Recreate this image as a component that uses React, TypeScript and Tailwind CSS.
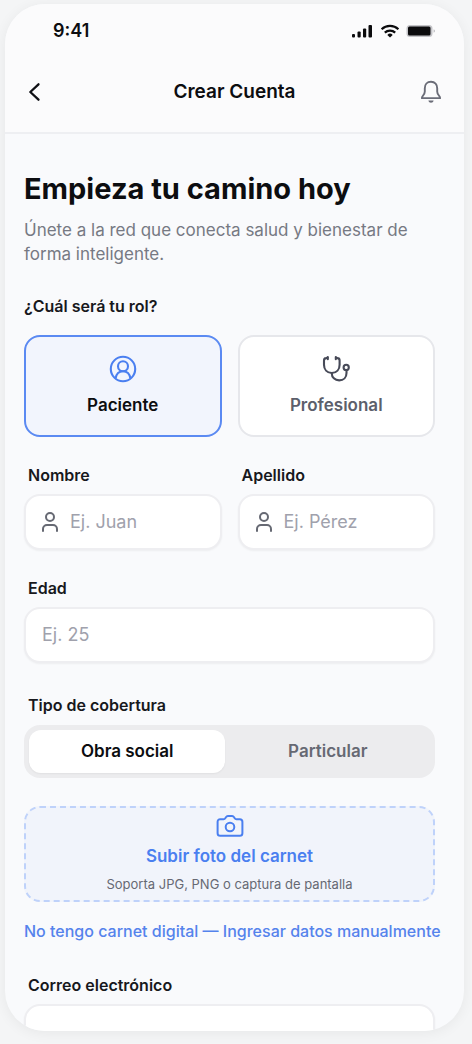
import { useState } from 'react';
import { User } from 'lucide-react';

type Role = 'paciente' | 'profesional';
type Coverage = 'obra-social' | 'particular';

const StatusIcons = () => (
  <div className="flex items-center gap-1.5">
    <svg className="h-4 w-6" viewBox="0 0 24 16" fill="#0b0b0d" aria-hidden="true">
      <rect x="2" y="11" width="3" height="3.5" rx="1" />
      <rect x="7.5" y="8.5" width="3.2" height="6" rx="1" />
      <rect x="13" y="5.5" width="3.2" height="9" rx="1" />
      <rect x="18.5" y="2" width="3.5" height="12.5" rx="1" />
    </svg>
    <svg className="h-4 w-5" viewBox="0 0 20 16" fill="none" stroke="#0b0b0d" strokeWidth="2.2" aria-hidden="true">
      <path d="M1.6 6.2a12.3 12.3 0 0 1 16.8 0" />
      <path d="M4.8 9.6a7.6 7.6 0 0 1 10.4 0" />
      <path d="M10 14.6 7.3 11.9a3.9 3.9 0 0 1 5.4 0Z" fill="#0b0b0d" stroke="none" />
    </svg>
    <svg className="h-4 w-8" viewBox="0 0 32 16" aria-hidden="true">
      <rect x="0.5" y="2" width="26" height="12" rx="3.5" fill="#c4c4c8" />
      <rect x="2" y="3.5" width="22.5" height="9" rx="1.5" fill="#0b0b0d" />
      <path d="M27.6 6.2c1.8.6 1.8 2.9 0 3.5Z" fill="#b9b9bd" />
    </svg>
  </div>
);

const BackIcon = () => (
  <svg className="h-5 w-4" viewBox="0 0 16 20" fill="none" stroke="#0f1015" strokeWidth="2.3" strokeLinecap="round" strokeLinejoin="round" aria-hidden="true">
    <path d="M12.5 2.3 4.3 10l8.200 7.700" />
  </svg>
);

const BellIcon = () => (
  <svg className="size-6" viewBox="0 0 24 24" fill="none" stroke="#6b6d78" strokeWidth="1.9" strokeLinejoin="round" aria-hidden="true">
    <path d="M12 1.8c-4 0-6.2 2.8-6.2 6.4v3.2c0 1.6-.6 2.7-1.7 4.1-.8 1-1.3 1.7-1.2 2.6h18.2c.1-.9-.4-1.6-1.2-2.6-1.1-1.4-1.7-2.5-1.7-4.1V8.2c0-3.6-2.2-6.4-6.2-6.4Z" />
    <path d="M9.4 20.6h5.2c-.3 1.4-1.3 2.2-2.6 2.2s-2.3-.8-2.6-2.2Z" fill="#6b6d78" stroke="none" />
  </svg>
);

const PatientIcon = () => (
  <svg className="size-7" viewBox="0 0 28 28" fill="none" stroke="#4a7ff0" strokeWidth="2.1" aria-hidden="true">
    <circle cx="14" cy="14" r="12.2" />
    <circle cx="14" cy="11.3" r="5" />
    <path d="M6.6 23.4c.7-4.2 3.4-7.1 7.4-7.1s6.7 2.9 7.4 7.1" />
  </svg>
);

const StethoscopeIcon = () => (
  <svg className="size-7" viewBox="0 0 28 28" fill="none" stroke="#474a58" strokeWidth="2.1" strokeLinecap="round" strokeLinejoin="round" aria-hidden="true">
    <path d="M5.5 2.8 4 3.1C2.6 3.3 2 4.1 2 5.5v4.2C2 14.5 5 18 9.8 18s7.8-3.5 7.8-8.3V5.5c0-1.4-.6-2.2-2-2.4l-1.5-.3" />
    <path d="M5.8 2v2.2M13.8 2v2.2" />
    <path d="M9.8 18v.4c0 3.9 3 7 7.4 7s7.3-3.200 7.300-7.500v-2.400" />
    <circle cx="24.2" cy="12.4" r="2.6" />
  </svg>
);

const CameraIcon = () => (
  <svg className="h-6 w-7" viewBox="0 0 28 24" fill="none" stroke="#4a7ff0" strokeWidth="2" strokeLinecap="round" strokeLinejoin="round" aria-hidden="true">
    <path d="M4.2 5.2h3.4c.8 0 1.3-.4 1.7-1l.8-1.2c.4-.7 1-1 1.8-1h4.2c.8 0 1.4.3 1.8 1l.8 1.2c.4.6.9 1 1.7 1h3.4c1.6 0 2.6 1 2.6 2.6v11.4c0 1.6-1 2.6-2.6 2.6H4.2c-1.6 0-2.6-1-2.6-2.6V7.8c0-1.6 1-2.6 2.6-2.6Z" />
    <circle cx="14" cy="13" r="4.3" />
  </svg>
);

type FieldProps = {
  id: string;
  label: string;
  placeholder?: string;
  type?: string;
  withIcon?: boolean;
};

const Field = ({ id, label, placeholder, type = 'text', withIcon = false }: FieldProps) => (
  <div className="min-w-0">
    <label htmlFor={id} className="block pl-1 text-base leading-6 font-semibold text-[#17181c]">
      {label}
    </label>
    <div className="mt-[7px] flex h-14 items-center gap-2 rounded-2xl border-2 border-[#eeeef1] bg-white px-4 shadow-xs">
      {withIcon && <User className="-ml-1 size-6 shrink-0 text-[#666973]" strokeWidth={2} />}
      <input
        id={id}
        type={type}
        placeholder={placeholder}
        className="w-full min-w-0 bg-transparent text-lg text-[#17181c] outline-none placeholder:text-[#a0a1ac]"
      />
    </div>
  </div>
);

export default function App() {
  const [role, setRole] = useState<Role>('paciente');
  const [coverage, setCoverage] = useState<Coverage>('obra-social');

  const roles = [
    { id: 'paciente' as Role, label: 'Paciente', icon: <PatientIcon /> },
    { id: 'profesional' as Role, label: 'Profesional', icon: <StethoscopeIcon /> },
  ];

  const coverages = [
    { id: 'obra-social' as Coverage, label: 'Obra social' },
    { id: 'particular' as Coverage, label: 'Particular' },
  ];

  return (
    <div className="h-screen bg-[#f4f5f6] pt-1 pr-2 pb-[13px] pl-[5px] font-['Inter',sans-serif] text-[#0c0d10]">
      <div className="h-full overflow-hidden rounded-[40px] bg-[#f9fafc] shadow-[0_2px_14px_rgba(0,0,0,0.06)]">
        {/* Status bar */}
        <div className="flex items-center justify-between bg-[#fbfbfc] pt-4 pr-[26px] pb-[10px] pl-12">
          <span className="text-lg leading-[22px] font-semibold">9:41</span>
          <StatusIcons />
        </div>

        {/* Header */}
        <header className="grid h-[82px] grid-cols-[40px_1fr_40px] items-center border-b-2 border-[#eeeff2] bg-[#fbfbfc] px-[21px]">
          <button type="button" aria-label="Volver" className="justify-self-start">
            <BackIcon />
          </button>
          <h1 className="text-center text-[19px] font-semibold">Crear Cuenta</h1>
          <button type="button" aria-label="Notificaciones" className="justify-self-end">
            <BellIcon />
          </button>
        </header>

        <main className="pt-[37px] pr-[29px] pl-[19px]">
          <h2 className="text-[29px] leading-9 font-bold whitespace-nowrap">Empieza tu camino hoy</h2>
          <p className="mt-[11px] text-[17px] leading-6 text-[#767983]">
            Únete a la red que conecta salud y bienestar de forma inteligente.
          </p>

          {/* Role */}
          <h3 className="mt-7 text-base leading-6 font-semibold text-[#17181c]">¿Cuál será tu rol?</h3>
          <div className="mt-[17px] grid grid-cols-2 gap-4">
            {roles.map((item) => (
              <button
                key={item.id}
                type="button"
                aria-pressed={role === item.id}
                onClick={() => setRole(item.id)}
                className={`flex h-[102px] flex-col items-center justify-center gap-[10px] rounded-2xl border-2 text-[17px] leading-6 font-semibold ${
                  role === item.id
                    ? 'border-[#5b8af2] bg-[#f2f5fd] text-[#0c0d10]'
                    : 'border-[#e6e7eb] bg-white text-[#5c5f6b]'
                }`}
              >
                {item.icon}
                {item.label}
              </button>
            ))}
          </div>

          {/* Personal data */}
          <div className="mt-[26px] grid grid-cols-2 gap-4">
            <Field id="nombre" label="Nombre" placeholder="Ej. Juan" withIcon />
            <Field id="apellido" label="Apellido" placeholder="Ej. Pérez" withIcon />
          </div>
          <div className="mt-[26px]">
            <Field id="edad" label="Edad" placeholder="Ej. 25" />
          </div>

          {/* Coverage */}
          <h3 className="mt-[30px] pl-1 text-base leading-6 font-semibold text-[#17181c]">Tipo de cobertura</h3>
          <div className="mt-2 grid h-[53px] grid-cols-[49fr_51fr] rounded-2xl bg-[#ececee] p-[5px]">
            {coverages.map((item) => (
              <button
                key={item.id}
                type="button"
                aria-pressed={coverage === item.id}
                onClick={() => setCoverage(item.id)}
                className={`rounded-xl text-[17px] font-semibold ${
                  coverage === item.id ? 'bg-white text-[#0c0d10] shadow-xs' : 'text-[#666973]'
                }`}
              >
                {item.label}
              </button>
            ))}
          </div>

          {/* Card upload */}
          <button
            type="button"
            className="mt-7 flex h-24 w-full flex-col items-center justify-center rounded-2xl border-2 border-dashed border-[#bfd2fa] bg-[#f1f4fb] pt-1"
          >
            <CameraIcon />
            <span className="mt-1 text-[17px] leading-7 font-semibold text-[#4a7ff0]">Subir foto del carnet</span>
            <span className="text-[13px] leading-7 text-[#666973]">Soporta JPG, PNG o captura de pantalla</span>
          </button>

          <a href="#manual" className="mt-[17px] block text-base leading-6 font-medium whitespace-nowrap text-[#5583ec]">
            No tengo carnet digital — Ingresar datos manualmente
          </a>

          <div className="mt-[30px]">
            <Field id="correo" label="Correo electrónico" type="email" />
          </div>
        </main>
      </div>
    </div>
  );
}
